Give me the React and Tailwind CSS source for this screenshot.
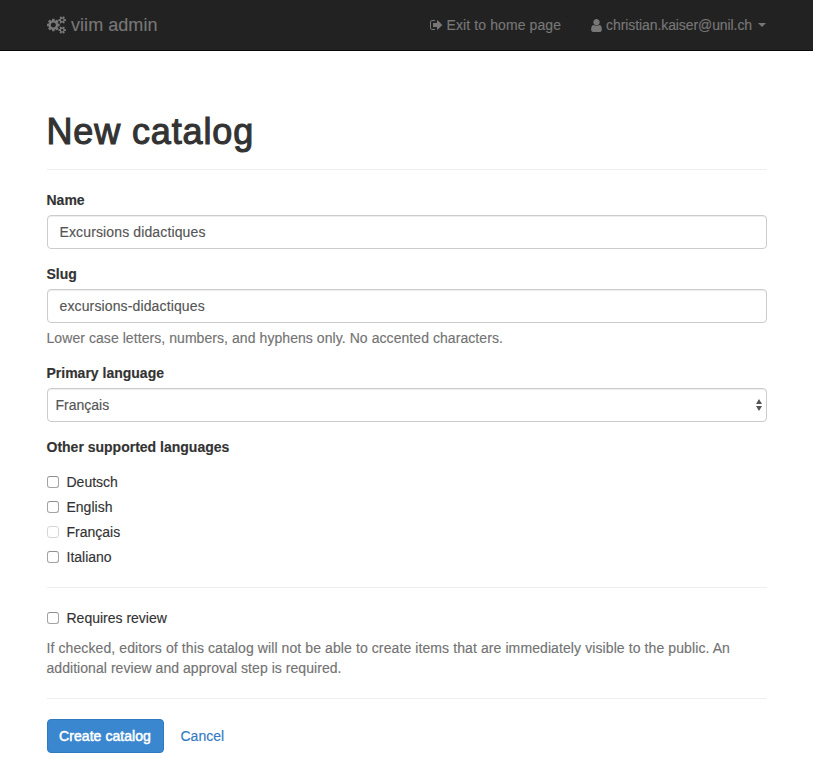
import React from "react";

function CogsIcon() {
  return (
    <svg viewBox="0 0 1920 1792" className="h-[18px] w-[19px] shrink-0 fill-current" aria-hidden="true">
      <path d="M896 896q0-106-75-181t-181-75-181 75-75 181 75 181 181 75 181-75 75-181zm768 512q0-52-38-90t-90-38-90 38-38 90q0 53 37.5 90.5t90.5 37.5 90.5-37.5 37.5-90.5zm0-1024q0-52-38-90t-90-38-90 38-38 90q0 53 37.5 90.5t90.5 37.5 90.5-37.5 37.5-90.5zm-384 421v185q0 10-7 19.5t-16 10.5l-155 24q-11 35-32 76 34 48 90 115 7 11 7 20 0 12-7 19-23 30-82.5 89.5t-78.5 59.5q-11 0-21-7l-115-90q-37 19-77 31-11 108-23 155-7 24-30 24h-186q-11 0-20-7.5t-10-17.5l-23-153q-34-10-75-31l-118 89q-7 7-20 7-11 0-21-8-144-133-144-160 0-9 7-19 10-14 41-53t47-61q-23-44-35-82l-152-24q-10-1-17-9.5t-7-19.5v-185q0-10 7-19.5t16-10.5l155-24q11-35 32-76-34-48-90-115-7-11-7-20 0-12 7-20 22-30 82-89t79-59q11 0 21 7l115 90q34-18 77-32 11-108 23-154 7-24 30-24h186q11 0 20 7.5t10 17.5l23 153q34 10 75 31l118-89q8-7 20-7 11 0 21 8 144 133 144 160 0 8-7 19-12 16-42 54t-45 60q23 48 34 82l152 23q10 2 17 10.5t7 19.5zm640 533v140q0 16-149 31-12 27-30 52 51 113 51 138 0 4-4 7-122 71-124 71-8 0-46-47t-52-68q-20 2-30 2t-30-2q-14 21-52 68t-46 47q-2 0-124-71-4-3-4-7 0-25 51-138-18-25-30-52-149-15-149-31v-140q0-16 149-31 13-29 30-52-51-113-51-138 0-4 4-7 4-2 35-20t59-34 30-16q8 0 46 46.5t52 67.5q20-2 30-2t30 2q51-71 92-112l6-2q4 0 124 70 4 3 4 7 0 25-51 138 17 23 30 52 149 15 149 31zm0-1024v140q0 16-149 31-12 27-30 52 51 113 51 138 0 4-4 7-122 71-124 71-8 0-46-47t-52-68q-20 2-30 2t-30-2q-14 21-52 68t-46 47q-2 0-124-71-4-3-4-7 0-25 51-138-18-25-30-52-149-15-149-31v-140q0-16 149-31 13-29 30-52-51-113-51-138 0-4 4-7 4-2 35-20t59-34 30-16q8 0 46 46.5t52 67.5q20-2 30-2t30 2q51-71 92-112l6-2q4 0 124 70 4 3 4 7 0 25-51 138 17 23 30 52 149 15 149 31z" />
    </svg>
  );
}

function SignOutIcon() {
  return (
    <svg viewBox="64 0 1664 1792" className="h-[14px] w-[13px] shrink-0 fill-current" aria-hidden="true">
      <path d="M704 1440q0 4 1 20t.5 26.5-3 23.5-10 19.5-20.5 6.5h-320q-119 0-203.5-84.5t-84.5-203.5v-704q0-119 84.5-203.5t203.5-84.5h320q13 0 22.5 9.5t9.5 22.5q0 4 1 20t.5 26.5-3 23.5-10 19.5-20.5 6.5h-320q-66 0-113 47t-47 113v704q0 66 47 113t113 47h312l11.5 1 11.5 3 8 5.5 7 9 2 13.5zm928-544q0 26-19 45l-544 544q-19 19-45 19t-45-19-19-45v-288h-448q-26 0-45-19t-19-45v-384q0-26 19-45t45-19h448v-288q0-26 19-45t45-19 45 19l544 544q19 19 19 45z" />
    </svg>
  );
}

function UserIcon() {
  return (
    <svg viewBox="256 0 1280 1792" className="h-[15px] w-[11px] shrink-0 fill-current" aria-hidden="true">
      <path d="M1536 1399q0 109-62.5 187t-150.5 78h-854q-88 0-150.5-78t-62.5-187q0-85 8.5-160.5t31.5-152 58.5-131 94-89 134.5-34.5q131 128 313 128t313-128q76 0 134.5 34.5t94 89 58.5 131 31.5 152 8.5 160.5zm-256-887q0 159-112.5 271.5t-271.5 112.5-271.5-112.5-112.5-271.5 112.5-271.5 271.5-112.5 271.5 112.5 112.5 271.5z" />
    </svg>
  );
}

function Label({ children }) {
  return <label className="mb-[5px] block w-fit font-bold">{children}</label>;
}

function TextInput({ children }) {
  return (
    <div className="flex h-[34px] items-center rounded border border-[#ccc] px-3 tracking-[0.13px] text-[#555] shadow-[inset_0_1px_1px_rgba(0,0,0,0.075)]">
      {children}
    </div>
  );
}

function Checkbox({ label, disabled }) {
  return (
    <div className="flex h-5 items-center gap-2">
      <span
        className={
          disabled
            ? "h-3 w-3 rounded-[3px] border border-[#d6d6d6]"
            : "h-3 w-3 rounded-[3px] border border-[#a3a3a3] border-t-[#8f8f8f]"
        }
      />
      <span>{label}</span>
    </div>
  );
}

const languages = [
  { label: "Deutsch" },
  { label: "English" },
  { label: "Français", disabled: true },
  { label: "Italiano" },
];

export default function App() {
  return (
    <div className="min-h-[782px] bg-white font-['Liberation_Sans',Arial,sans-serif] text-[14px] leading-5 text-[#333] [-webkit-text-stroke:0.15px]">
      <nav className="flex h-[51px] items-center border-b border-[#080808] bg-[#222] pl-[47px] pr-[47px] text-[#777]">
        <div className="flex items-center gap-[5px] text-[18px] tracking-[0.05px]">
          <CogsIcon />
          <span>viim admin</span>
        </div>
        <div className="ml-auto flex items-center gap-[30px]">
          <div className="flex items-center gap-1">
            <SignOutIcon />
            <span className="tracking-[0.1px]">Exit to home page</span>
          </div>
          <div className="flex items-center gap-1">
            <UserIcon />
            <span className="tracking-[-0.09px]">christian.kaiser@unil.ch</span>
            <span className="ml-[2px] border-x-4 border-t-4 border-x-transparent border-t-[#777]" />
          </div>
        </div>
      </nav>

      <main className="mx-auto w-[720px] pt-[61px]">
        <header className="border-b border-[#eee] pb-[17px]">
          <h1 className="w-fit text-[36px] leading-[40px] tracking-[0.86px] [-webkit-text-stroke:1.1px_#333]">New catalog</h1>
        </header>

        <div className="pt-5">
          <Label>Name</Label>
          <TextInput>Excursions didactiques</TextInput>
        </div>

        <div className="pt-[15px]">
          <Label>Slug</Label>
          <TextInput>excursions-didactiques</TextInput>
          <p className="mt-[5px] w-fit tracking-[0.065px] text-[#737373]">
            Lower case letters, numbers, and hyphens only. No accented characters.
          </p>
        </div>

        <div className="pt-[15px]">
          <Label>Primary language</Label>
          <div className="flex h-[34px] items-center justify-between rounded border border-[#ccc] pl-2 pr-1 text-[#555] shadow-[inset_0_1px_1px_rgba(0,0,0,0.075)]">
            <span>Français</span>
            <svg viewBox="0 0 6 12" className="h-3 w-[6px] fill-[#555]" aria-hidden="true">
              <path d="M0 5 3 0l3 5zM0 7h6l-3 5z" />
            </svg>
          </div>
        </div>

        <div className="pt-[15px]">
          <Label>Other supported languages</Label>
          <div className="mt-[15px] flex flex-col gap-[5px]">
            {languages.map((l) => (
              <Checkbox key={l.label} label={l.label} disabled={l.disabled} />
            ))}
          </div>
        </div>

        <hr className="my-5 border-[#eee]" />

        <Checkbox label="Requires review" />
        <p className="mt-[10px] text-[#737373]">
          <span className="tracking-[0.097px]">
            If checked, editors of this catalog will not be able to create items that are immediately visible to the public. An
          </span>
          <br />
          <span className="tracking-[0.05px]">additional review and approval step is required.</span>
        </p>

        <hr className="my-5 border-[#eee]" />

        <div className="flex items-center gap-[17px]">
          <button className="h-[34px] w-[117px] whitespace-nowrap rounded border border-[#2e7ac0] bg-[#3a87d0] tracking-[0.06px] text-white [-webkit-text-stroke:0.5px_white]">
            Create catalog
          </button>
          <a className="text-[#337ac3]">Cancel</a>
        </div>
      </main>
    </div>
  );
}
